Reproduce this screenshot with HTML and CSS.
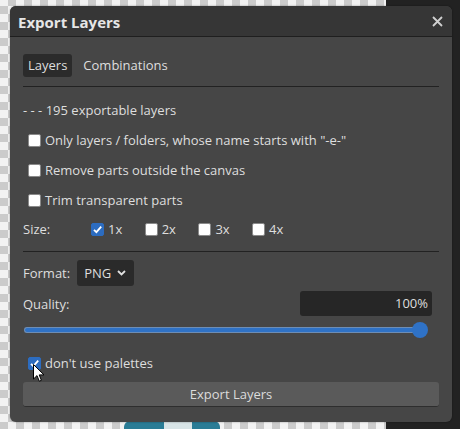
FILE: index.html
```html
<!DOCTYPE html>
<html>
<head>
<meta charset="utf-8">
<link rel="stylesheet" href="styles.css">
</head>
<body>
<div class="stage">
  <div class="dark-side"></div>
  <div class="teal"><span class="teal-light"></span></div>
  <div class="dialog">
    <div class="titlebar">
      <span class="title">Export Layers</span>
      <svg class="close" width="11" height="11" viewBox="0 0 11 11"><path d="M1 1L10 10M10 1L1 10" stroke="#d0d0d0" stroke-width="1.8" fill="none"/></svg>
    </div>
    <div class="content">
      <div class="tabs">
        <span class="tab active">Layers</span>
        <span class="tab">Combinations</span>
      </div>
      <div class="hr hr1"></div>
      <div class="info">- - - 195 exportable layers</div>
      <label class="opt"><span class="cb"></span>Only layers / folders, whose name starts with "-e-"</label>
      <label class="opt"><span class="cb"></span>Remove parts outside the canvas</label>
      <label class="opt"><span class="cb"></span>Trim transparent parts</label>
      <div class="size-row">
        <span class="size-label">Size:</span>
        <label class="size-item"><span class="cb checked"><svg width="13" height="13" viewBox="0 0 13 13"><path d="M3 6.8L5.4 9.2L10.2 3.6" stroke="#fff" stroke-width="1.8" fill="none"/></svg></span>1x</label>
        <label class="size-item"><span class="cb"></span>2x</label>
        <label class="size-item"><span class="cb"></span>3x</label>
        <label class="size-item"><span class="cb"></span>4x</label>
      </div>
      <div class="hr hr2"></div>
      <div class="format-row">
        <span>Format:</span>
        <span class="select">PNG<svg class="chev" width="9" height="6" viewBox="0 0 9 6"><path d="M1 1L4.5 4.5L8 1" stroke="#e0e0e0" stroke-width="1.8" fill="none"/></svg></span>
      </div>
      <div class="quality-row">
        <span>Quality:</span>
        <span class="qinput">100%</span>
      </div>
      <div class="slider"><div class="track"></div><div class="thumb"></div></div>
      <label class="opt palettes"><span class="cb checked"><svg width="13" height="13" viewBox="0 0 13 13"><path d="M3 6.8L5.4 9.2L10.2 3.6" stroke="#fff" stroke-width="1.8" fill="none"/></svg></span>don't use palettes</label>
      <div class="button">Export Layers</div>
    </div>
  </div>
  <svg class="cursor" width="12" height="19" viewBox="0 0 12 19"><path d="M0.5 0.5L0.5 15L4 11.6L6.3 17.2L8.4 16.3L6.2 10.9L11 10.9Z" fill="#fff" stroke="#000" stroke-width="1"/></svg>
</div>
</body>
</html>
```
FILE: styles.css
```css
html, body {
  margin: 0;
  padding: 0;
}
body {
  width: 460px;
  height: 429px;
  overflow: hidden;
  font-family: "Open Sans", "Noto Sans", sans-serif;
  font-size: 13px;
  color: #dedede;
}
.stage {
  position: relative;
  width: 460px;
  height: 429px;
  background-color: #ffffff;
  background-image:
    conic-gradient(#cbcbcb 25%, #f2f2f2 25% 50%, #cbcbcb 50% 75%, #f2f2f2 75%);
  background-size: 16px 16px;
  background-position: 0 -2px;
  overflow: hidden;
}
.dark-side {
  position: absolute;
  left: 386px;
  top: 0;
  width: 74px;
  height: 429px;
  background: #222222;
}
.teal {
  position: absolute;
  left: 124px;
  top: 421px;
  width: 96px;
  height: 12px;
  background: #2a7c95;
  border-radius: 6px 6px 0 0;
}
.teal-light {
  position: absolute;
  left: 40px;
  top: 0;
  width: 28px;
  height: 12px;
  background: #d8e4e6;
}
.dialog {
  position: absolute;
  left: 10px;
  top: 6px;
  width: 442px;
  height: 416px;
  background: #464646;
  border-radius: 6px;
  overflow: hidden;
  box-shadow: 0 0 2px rgba(0,0,0,0.4);
}
.titlebar {
  height: 30px;
  background: #363636;
  border-bottom: 1px solid #1f1f1f;
  display: flex;
  align-items: center;
  justify-content: space-between;
  padding: 0 9px 0 8px;
}
.title {
  font-weight: 700;
  font-size: 15px;
  color: #e6e6e6;
  margin-top: 1px;
}
.close {
  display: block;
}
.content {
  padding: 17px 13px 0 13px;
  display: flex;
  flex-direction: column;
}
.tabs {
  display: flex;
  height: 23px;
  align-items: center;
}
.tab {
  height: 23px;
  line-height: 23px;
  padding: 0 5px;
  border-radius: 3px;
  margin-right: 6px;
}
.tab.active {
  background: #2b2b2b;
}
.hr {
  height: 1px;
  background: #222;
}
.hr1 { margin-top: 9px; }
.info {
  margin-top: 13px;
  height: 20px;
  line-height: 20px;
}
.opt {
  display: flex;
  align-items: center;
  height: 30px;
  padding-left: 5px;
}
.info + .opt { margin-top: 5px; }
.cb {
  width: 11px;
  height: 11px;
  background: #fff;
  border: 1px solid #8a8a8a;
  border-radius: 2px;
  margin-right: 4px;
  flex-shrink: 0;
  position: relative;
}
.cb.checked {
  background: #2c6cc0;
  border-color: #2c6cc0;
}
.cb svg {
  position: absolute;
  left: -1px;
  top: -1px;
}
.size-row {
  display: flex;
  align-items: center;
  height: 28px;
}
.size-label {
  width: 68px;
}
.size-item {
  display: flex;
  align-items: center;
  width: 53.7px;
}
.hr2 { margin-top: 8px; }
.format-row {
  margin-top: 8px;
  height: 26px;
  display: flex;
  align-items: center;
}
.select {
  margin-left: 7px;
  height: 26px;
  width: 57px;
  box-sizing: border-box;
  padding-left: 7px;
  background: #2a2a2a;
  border-radius: 3px;
  display: flex;
  align-items: center;
}
.chev {
  margin-left: 6px;
}
.quality-row {
  margin-top: 5px;
  height: 25px;
  display: flex;
  align-items: center;
  justify-content: space-between;
}
.qinput {
  width: 132px;
  height: 25px;
  line-height: 25px;
  box-sizing: border-box;
  text-align: right;
  padding-right: 4px;
  background: #262626;
  border-radius: 3px;
  margin-right: 7px;
}
.slider {
  margin-top: 6px;
  height: 16px;
  position: relative;
}
.track {
  position: absolute;
  left: 1px;
  top: 5px;
  width: 396px;
  height: 6px;
  background: #2f72c6;
  border: 1px solid #6d8db5;
  border-right: none;
  box-sizing: border-box;
  border-radius: 3px 0 0 3px;
}
.thumb {
  position: absolute;
  left: 389px;
  top: 0;
  width: 16px;
  height: 16px;
  border-radius: 50%;
  background: #2f72c6;
}
.palettes {
  margin-top: 13px;
  height: 24px;
}
.button {
  margin-top: 7px;
  height: 25px;
  line-height: 24px;
  text-align: center;
  background: #5a5a5a;
  border-radius: 3px;
  border-bottom: 1px solid #2e2e2e;
  box-sizing: border-box;
  color: #dcdcdc;
}
.cursor {
  position: absolute;
  left: 33px;
  top: 364px;
}
```
